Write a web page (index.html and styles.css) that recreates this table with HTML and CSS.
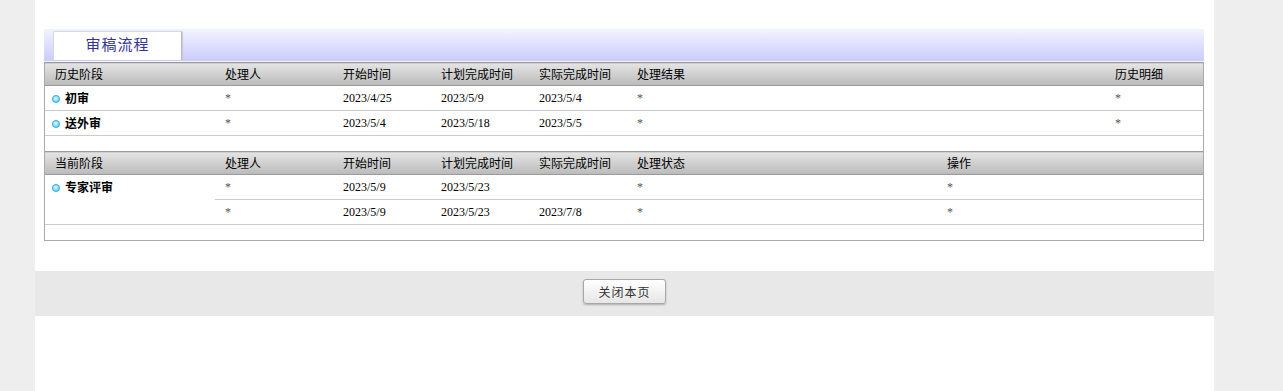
FILE: index.html
```html
<!DOCTYPE html>
<html lang="zh-CN">
<head>
<meta charset="utf-8">
<title>审稿流程</title>
<link rel="stylesheet" href="styles.css">
</head>
<body>
<div class="page">
  <div class="content">
    <div class="tabbar">
      <div class="tab">审稿流程</div>
    </div>
    <div class="flow">
      <table class="grid">
        <colgroup>
          <col class="c1"><col class="c2"><col class="c3"><col class="c4"><col class="c5"><col class="c6a"><col>
        </colgroup>
        <thead>
          <tr class="head">
            <th>历史阶段</th><th>处理人</th><th>开始时间</th><th>计划完成时间</th><th>实际完成时间</th><th>处理结果</th><th>历史明细</th>
          </tr>
        </thead>
        <tbody>
          <tr>
            <td class="stage"><span class="dot"></span>初审</td><td class="star">*</td><td>2023/4/25</td><td>2023/5/9</td><td>2023/5/4</td><td class="star">*</td><td class="star">*</td>
          </tr>
          <tr>
            <td class="stage"><span class="dot"></span>送外审</td><td class="star">*</td><td>2023/5/4</td><td>2023/5/18</td><td>2023/5/5</td><td class="star">*</td><td class="star">*</td>
          </tr>
          <tr class="spacer"><td colspan="7"></td></tr>
        </tbody>
      </table>
      <table class="grid">
        <colgroup>
          <col class="c1"><col class="c2"><col class="c3"><col class="c4"><col class="c5"><col class="c6b"><col>
        </colgroup>
        <thead>
          <tr class="head">
            <th>当前阶段</th><th>处理人</th><th>开始时间</th><th>计划完成时间</th><th>实际完成时间</th><th>处理状态</th><th>操作</th>
          </tr>
        </thead>
        <tbody>
          <tr>
            <td class="stage top" rowspan="2"><span class="dot"></span>专家评审</td><td class="star">*</td><td>2023/5/9</td><td>2023/5/23</td><td></td><td class="star">*</td><td class="star">*</td>
          </tr>
          <tr>
            <td class="star">*</td><td>2023/5/9</td><td>2023/5/23</td><td>2023/7/8</td><td class="star">*</td><td class="star">*</td>
          </tr>
          <tr class="spacer"><td colspan="7"></td></tr>
        </tbody>
      </table>
    </div>
  </div>
  <div class="actions">
    <button class="btn" type="button">关闭本页</button>
  </div>
</div>
</body>
</html>
```
FILE: styles.css
```css
html, body {
  margin: 0;
  padding: 0;
}
body {
  background: #eeeeee;
  font-family: "Liberation Serif", "Noto Sans CJK SC", serif;
  font-size: 12px;
  color: #000;
  height: 391px;
  overflow: hidden;
}
.page {
  margin-left: 35px;
  width: 1179px;
  background: #ffffff;
  height: 391px;
}
.content {
  padding: 29px 10px 30px 9px;
}
.tabbar {
  height: 32px;
  background: linear-gradient(#f3f3ff, #c9ccfd);
  display: flex;
  align-items: flex-end;
  padding-left: 9px;
  border-bottom: 1px solid #f4f4f8;
}
.tab {
  width: 127px;
  height: 28px;
  margin-bottom: 1px;
  background: #ffffff;
  border: 1px solid #d8d8e4;
  border-right-color: #b8b8c8;
  border-bottom: none;
  border-radius: 2px 2px 0 0;
  box-shadow: 1px 0 1px #c8c8d8;
  color: #333399;
  font-size: 15px;
  line-height: 27px;
  text-align: center;
  letter-spacing: 1px;
}
.flow {
  border: 1px solid #aaaaaa;
  border-top: none;
}
.grid {
  width: 100%;
  border-collapse: collapse;
  table-layout: fixed;
}
.c1 { width: 170px; }
.c2 { width: 118px; }
.c3 { width: 98px; }
.c4 { width: 98px; }
.c5 { width: 98px; }
.c6a { width: 478px; }
.c6b { width: 310px; }
.head th {
  height: 22px;
  padding: 0 0 0 10px;
  text-align: left;
  font-weight: normal;
  background: linear-gradient(#e4e4e4, #bababa);
  border-top: 1px solid #9a9a9a;
  border-bottom: 1px solid #9a9a9a;
}
.grid td {
  height: 24px;
  padding: 0 0 0 10px;
  border-bottom: 1px solid #cccccc;
  white-space: nowrap;
}
.grid td.stage {
  padding-left: 7px;
  font-weight: bold;
}
.grid td.top {
  vertical-align: top;
  padding-top: 3px;
  height: auto;
}
.dot {
  display: inline-block;
  width: 6px;
  height: 6px;
  border-radius: 50%;
  border: 1px solid #3aa6de;
  background: radial-gradient(circle at 45% 40%, #d8fbff 0, #7ee0f4 60%, #35b8e4 100%);
  margin-right: 5px;
  vertical-align: 0px;
}
.star {
  color: #555555;
}
.spacer td {
  height: 15px;
  padding: 0;
  border-bottom: none;
}
.actions {
  background: #e8e8e8;
  height: 45px;
  display: flex;
  justify-content: center;
  align-items: flex-start;
}
.btn {
  margin-top: 8px;
  width: 83px;
  height: 25px;
  border: 1px solid #a8a8a8;
  border-radius: 3px;
  background: linear-gradient(#ffffff, #e6e6e6);
  box-shadow: 0 1px 2px rgba(0,0,0,0.25);
  font-family: "Noto Sans CJK SC", sans-serif;
  font-size: 12px;
  color: #333333;
  letter-spacing: 1px;
  padding: 0;
}
```
